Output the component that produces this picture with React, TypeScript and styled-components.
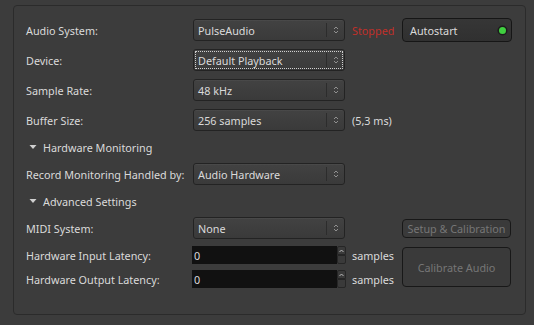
import React from 'react';
import styled, { createGlobalStyle } from 'styled-components';

const GlobalStyle = createGlobalStyle`
  html, body {
    margin: 0;
    padding: 0;
    background: #3c3c3c;
  }
  body {
    font-family: 'Noto Sans', 'DejaVu Sans', sans-serif;
    font-size: 10.8px;
    color: #dadada;
  }
`;

const Page = styled.div`
  width: 534px;
  height: 325px;
  padding: 5px 8px 0 13px;
  box-sizing: border-box;
`;

const Frame = styled.div`
  width: 513px;
  height: 310px;
  box-sizing: border-box;
  border: 1px solid #2b2b2b;
  border-radius: 4px;
  padding: 9px 0 0 12px;
`;

const Grid = styled.div`
  display: grid;
  grid-template-columns: 167px 159px 50px 110px;
  grid-template-rows: 30px 30px 30px 30px 24px 30px 24px 30px 24px 24px;
  align-items: center;
`;

const Label = styled.div`
  white-space: nowrap;
`;

const Aside = styled.div<{ $red?: boolean }>`
  white-space: nowrap;
  color: ${(p) => (p.$red ? '#c0302a' : '#dadada')};
`;

const Combo = styled.div<{ $focus?: boolean }>`
  position: relative;
  width: 152px;
  height: 22px;
  box-sizing: border-box;
  border: 1px solid #232323;
  border-radius: 3px;
  background: linear-gradient(#424242, #3a3a3a);
  display: flex;
  align-items: center;
  padding-left: 4px;
  box-shadow: inset 0 1px 0 rgba(255, 255, 255, 0.04);
  ${(p) =>
    p.$focus &&
    `
    &::after {
      content: '';
      position: absolute;
      inset: 1px;
      border: 1px dotted #d0d0d0;
      border-radius: 1px;
      pointer-events: none;
    }
  `}
`;

const ComboText = styled.span`
  flex: 1;
`;

const ComboArrow = styled.div`
  width: 17px;
  height: 14px;
  border-left: 1px solid #2c2c2c;
  display: flex;
  align-items: center;
  justify-content: center;
`;

const Expander = styled.div`
  grid-column: 1 / -1;
  display: flex;
  align-items: center;
  gap: 6px;
  padding-left: 3px;
`;

const Button = styled.div<{ $disabled?: boolean; $tall?: boolean }>`
  box-sizing: border-box;
  height: ${(p) => (p.$tall ? '40px' : '19px')};
  width: 109px;
  border: 1px solid #181818;
  border-radius: 4px;
  background: #3a3a3a;
  color: ${(p) => (p.$disabled ? '#767676' : '#dadada')};
  display: flex;
  align-items: center;
  justify-content: center;
  white-space: nowrap;
  ${(p) => p.$tall && 'grid-row: span 2;'}
`;

const ToggleButton = styled.div`
  box-sizing: border-box;
  height: 24px;
  width: 110px;
  border: 1px solid #161616;
  border-radius: 4px;
  background: linear-gradient(#363636, #303030);
  display: flex;
  align-items: center;
  justify-content: space-between;
  padding: 0 5px 0 7px;
`;

const Led = styled.span`
  width: 7px;
  height: 7px;
  border-radius: 50%;
  background: #40d040;
  box-shadow: 0 0 0 1.5px #1c1c1c;
`;

const SpinWrap = styled.div`
  display: flex;
  align-items: center;
  margin-left: -1px;
  height: 18px;
`;

const SpinEntry = styled.div`
  width: 145px;
  height: 18px;
  box-sizing: border-box;
  background: #111111;
  padding-left: 2px;
  display: flex;
  align-items: center;
`;

const SpinButtons = styled.div`
  display: flex;
  flex-direction: column;
  width: 9px;
  height: 18px;
`;

const SpinHalf = styled.div<{ $top?: boolean }>`
  flex: 1;
  box-sizing: border-box;
  border: 1px solid #262626;
  border-radius: ${(p) => (p.$top ? '2px 2px 0 0' : '0 0 2px 2px')};
  background: #3a3a3a;
  display: flex;
  align-items: center;
  justify-content: center;
`;

const Updown = () => (
  <svg width="6" height="10" viewBox="0 0 6 10">
    <path d="M1 4 L3 2 L5 4 M1 6 L3 8 L5 6" stroke="#9a9a9a" strokeWidth="0.9" fill="none" />
  </svg>
);

const Triangle = () => (
  <svg width="8" height="6" viewBox="0 0 8 6">
    <path d="M0.5 1 H7.5 L4 5 Z" fill="#d0d0d0" />
  </svg>
);

const ComboBox = ({ text, focus }: { text: string; focus?: boolean }) => (
  <Combo $focus={focus}>
    <ComboText>{text}</ComboText>
    <ComboArrow>
      <Updown />
    </ComboArrow>
  </Combo>
);

const Spin = ({ value }: { value: string }) => (
  <SpinWrap>
    <SpinEntry>{value}</SpinEntry>
    <SpinButtons>
      <SpinHalf $top>
        <svg width="5" height="4" viewBox="0 0 5 4">
          <path d="M0.5 3 L2.5 1 L4.5 3" stroke="#c8c8c8" strokeWidth="0.9" fill="none" />
        </svg>
      </SpinHalf>
      <SpinHalf />
    </SpinButtons>
  </SpinWrap>
);

export default function App() {
  return (
    <>
      <GlobalStyle />
      <Page>
        <Frame>
          <Grid>
            <Label>Audio System:</Label>
            <ComboBox text="PulseAudio" />
            <Aside $red>Stopped</Aside>
            <ToggleButton>
              <span>Autostart</span>
              <Led />
            </ToggleButton>

            <Label>Device:</Label>
            <ComboBox text="Default Playback" focus />
            <span />
            <span />

            <Label>Sample Rate:</Label>
            <ComboBox text="48 kHz" />
            <span />
            <span />

            <Label>Buffer Size:</Label>
            <ComboBox text="256 samples" />
            <Aside>(5,3 ms)</Aside>
            <span />

            <Expander>
              <Triangle />
              <span>Hardware Monitoring</span>
            </Expander>

            <Label>Record Monitoring Handled by:</Label>
            <ComboBox text="Audio Hardware" />
            <span />
            <span />

            <Expander>
              <Triangle />
              <span>Advanced Settings</span>
            </Expander>

            <Label>MIDI System:</Label>
            <ComboBox text="None" />
            <span />
            <Button $disabled>Setup &amp; Calibration</Button>

            <Label>Hardware Input Latency:</Label>
            <Spin value="0" />
            <Aside>samples</Aside>
            <Button $disabled $tall>
              Calibrate Audio
            </Button>

            <Label>Hardware Output Latency:</Label>
            <Spin value="0" />
            <Aside>samples</Aside>
          </Grid>
        </Frame>
      </Page>
    </>
  );
}
